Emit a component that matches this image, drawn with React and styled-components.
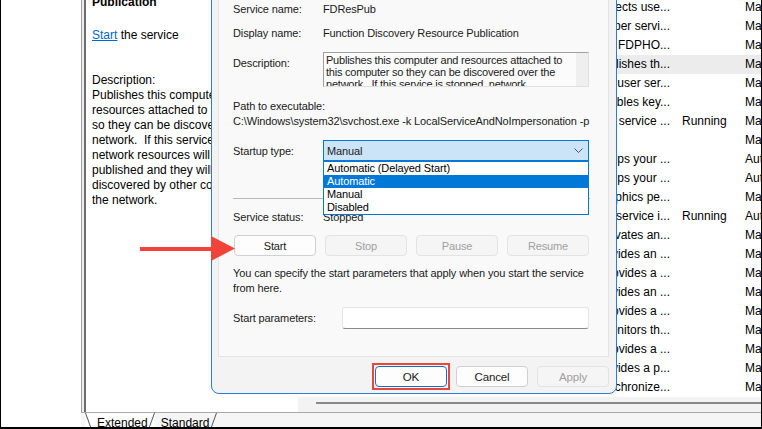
import React from 'react';
import styled, { createGlobalStyle } from 'styled-components';

const GlobalStyle = createGlobalStyle`
  html, body { margin: 0; padding: 0; background: #fff; }
  body { font-family: "Liberation Sans", Arial, sans-serif; color: #000; }
  * { box-sizing: border-box; }
`;

const Frame = styled.div`
  position: relative;
  width: 762px;
  height: 429px;
  display: flex;
  overflow: hidden;
  background: #fff;
  border-left: 1px solid #000;
  border-right: 1px solid #000;
  border-bottom: 2px solid #000;
`;

const TreePane = styled.div`
  width: 80px;
  flex: none;
  background: #fff;
`;

const MainPane = styled.div`
  flex: 1;
  min-width: 0;
  display: flex;
  flex-direction: column;
`;

const Body = styled.div`
  flex: 1;
  min-height: 0;
  display: flex;
`;

const Splitter = styled.div`
  width: 5px;
  flex: none;
  background: #ececec;
  border-left: 1px solid #a0a0a0;
  border-right: 2px solid #6e6e6e;
`;

const DetailPane = styled.div`
  width: 212px;
  flex: none;
  padding: 0 6px;
  background: #fff;
  font-size: 12px;
  line-height: 15px;
  overflow: hidden;
  white-space: pre;
`;

const DetailTitle = styled.div`
  margin-top: -5px;
  font-weight: bold;
`;

const DetailLine = styled.div`
  margin-top: ${p => p.$gap || 0}px;
`;

const ServiceLink = styled.a`
  color: #0066cc;
  text-decoration: underline;
`;

const ListPane = styled.div`
  flex: 1;
  min-width: 0;
  display: flex;
  flex-direction: column;
  background: #fff;
`;

const Rows = styled.div`
  flex: 1;
  overflow: hidden;
`;

const RowsInner = styled.div`
  margin-top: -2px;
`;

const ListRow = styled.div`
  display: grid;
  grid-template-columns: 374px 67px 1fr;
  height: 19px;
  line-height: 19px;
  font-size: 12px;
  background: ${p => (p.$selected ? '#ececec' : 'transparent')};
`;

const DescCell = styled.div`
  text-align: right;
  padding-right: 2px;
  white-space: nowrap;
  overflow: hidden;
`;

const StatusCell = styled.div`
  padding-left: 10px;
  white-space: nowrap;
`;

const StartupCell = styled.div`
  padding-left: 6px;
  white-space: nowrap;
  overflow: hidden;
`;

const HScroll = styled.div`
  height: 15px;
  flex: none;
  background: #f3f3f3;
  padding: 5px 0 0 18px;
`;

const ScrollThumb = styled.div`
  height: 2px;
  background: #8a8a8a;
`;

const TabStrip = styled.div`
  height: 15px;
  flex: none;
  display: flex;
  padding-left: 4px;
  background: #f6f6f6;
  border-top: 1px solid #a8a8a8;
  font-size: 12px;
  line-height: 15px;
  overflow: hidden;
`;

const Tab = styled.div`
  position: relative;
  padding: 3px ${p => p.$right}px 0 ${p => p.$left}px;
  background: ${p => (p.$active ? '#fff' : 'transparent')};

  &::before {
    content: "";
    display: ${p => (p.$active ? 'block' : 'none')};
    position: absolute;
    left: 0;
    top: 0;
    bottom: 0;
    width: 1px;
    background: #555;
    transform: skewX(20deg);
    transform-origin: top left;
  }

  &::after {
    content: "";
    position: absolute;
    right: 0;
    top: 0;
    bottom: 0;
    width: 1px;
    background: #555;
    transform: skewX(-20deg);
    transform-origin: top right;
  }
`;

/* ---- the properties dialog ---- */

const Dialog = styled.div`
  position: absolute;
  left: 210px;
  top: -40px;
  width: 406px;
  height: 434px;
  display: flex;
  flex-direction: column;
  background: #f3f3f3;
  border: 1px solid #2b7cd3;
  border-radius: 0 0 8px 8px;
  font-size: 11px;
  letter-spacing: -0.12px;
  color: #1a1a1a;
  z-index: 3;
`;

const Panel = styled.div`
  flex: 1;
  margin: 0 7px 0 6px;
  padding: 38px 18px 0 14px;
  background: #f9f9f9;
  border: 1px solid #e3e3e3;
  border-top: none;
`;

const FieldRow = styled.div`
  display: flex;
  align-items: ${p => (p.$top ? 'flex-start' : 'center')};
  height: ${p => p.$h}px;
  margin-top: ${p => p.$mt || 0}px;
`;

const Label = styled.div`
  width: ${p => p.$w || 90}px;
  flex: none;
  line-height: 16px;
  padding-top: ${p => p.$pt || 0}px;
  white-space: nowrap;
`;

const Value = styled.div`
  line-height: 16px;
  white-space: nowrap;
`;

const TextLine = styled.div`
  line-height: ${p => p.$lh || 16}px;
  margin-top: ${p => p.$mt || 0}px;
  white-space: pre;
`;

const DescBox = styled.div`
  width: 266px;
  height: 35px;
  display: flex;
  background: #fbfbfb;
  border: 1px solid #e0e0e0;
  border-top-color: #a0a0a0;
  border-left-color: #a0a0a0;
  overflow: hidden;
`;

const DescText = styled.div`
  flex: 1;
  padding: 1px 0 0 2px;
  line-height: 12px;
  letter-spacing: -0.22px;
  white-space: pre;
  overflow: hidden;
`;

const DescScroll = styled.div`
  width: 12px;
  flex: none;
  background: #efefef;
`;

const SelectWrap = styled.div`
  position: relative;
  width: 266px;
`;

const SelectBox = styled.div`
  height: 21px;
  display: flex;
  align-items: center;
  justify-content: space-between;
  padding: 0 5px 0 3px;
  background: #cce4f7;
  border: 1px solid #0078d4;
  line-height: 16px;
`;

const DropList = styled.div`
  position: absolute;
  left: 0;
  right: 0;
  top: 100%;
  background: #fff;
  border: 1px solid #0078d7;
  z-index: 2;
`;

const DropItem = styled.div`
  height: 13px;
  line-height: 13px;
  padding-left: 3px;
  white-space: nowrap;
  background: ${p => (p.$active ? '#0078d7' : 'transparent')};
  color: ${p => (p.$active ? '#fff' : '#000')};
`;

const Separator = styled.div`
  height: 1px;
  margin-top: 37px;
  background: #b8b8b8;
`;

const ControlRow = styled.div`
  display: grid;
  grid-template-columns: repeat(4, 82px);
  gap: 9px;
  margin: 10px 0 0 1px;
`;

const ControlButton = styled.div`
  height: 21px;
  display: flex;
  align-items: center;
  justify-content: center;
  border-radius: 4px;
  border: 1px solid ${p => (p.$disabled ? '#e3e3e3' : '#d0d0d0')};
  background: ${p => (p.$disabled ? '#f5f5f5' : '#fdfdfd')};
  color: ${p => (p.$disabled ? '#a0a0a0' : '#1a1a1a')};
`;

const ParamInput = styled.div`
  width: 247px;
  height: 22px;
  background: #fff;
  border: 1px solid #e5e5e5;
  border-bottom-color: #8a8a8a;
  border-radius: 3px;
`;

const Footer = styled.div`
  height: 36px;
  flex: none;
  display: flex;
  justify-content: flex-end;
  align-items: flex-start;
  gap: 9px;
  padding: 9px 7px 0 0;
`;

const Highlight = styled.span`
  display: inline-flex;
  outline: 2px solid #e8483c;
  outline-offset: 1px;
`;

const FooterButton = styled.div`
  width: 72px;
  height: 21px;
  display: flex;
  align-items: center;
  justify-content: center;
  border-radius: 4px;
  font-size: 11.5px;
  border: 1px solid
    ${p => (p.$variant === 'default' ? '#1a6fc4' : p.$variant === 'disabled' ? '#e3e3e3' : '#d0d0d0')};
  background: ${p => (p.$variant === 'disabled' ? '#f5f5f5' : '#fdfdfd')};
  color: ${p => (p.$variant === 'disabled' ? '#a0a0a0' : '#1a1a1a')};
`;

const Arrow = styled.svg`
  position: absolute;
  left: 137px;
  top: 234px;
  z-index: 4;
`;

const rows = [
  ['Protects use...', '', 'Ma'],
  ['Helper servi...', '', 'Ma'],
  ['The FDPHO...', '', 'Ma'],
  ['Publishes th...', '', 'Ma', true],
  ['This user ser...', '', 'Ma'],
  ['Enables key...', '', 'Ma'],
  ['This service ...', 'Running', 'Ma'],
  ['', '', 'Ma'],
  ['Helps your ...', '', 'Aut'],
  ['Helps your ...', '', 'Aut'],
  ['Graphics pe...', '', 'Ma'],
  ['This service i...', 'Running', 'Aut'],
  ['Activates an...', '', 'Ma'],
  ['Provides an ...', '', 'Ma'],
  ['Provides a ...', '', 'Ma'],
  ['Provides an ...', '', 'Ma'],
  ['Provides a ...', '', 'Ma'],
  ['Monitors th...', '', 'Ma'],
  ['Provides a ...', '', 'Ma'],
  ['Provides a p...', '', 'Ma'],
  ['Synchronize...', '', 'Ma'],
];

const descLines = [
  'Publishes this computer and',
  'resources attached to this computer',
  'so they can be discovered over the',
  'network.  If this service is stopped,',
  'network resources will no longer be',
  'published and they will not be',
  'discovered by other computers on',
  'the network.',
];

export default function App() {
  return (
    <>
      <GlobalStyle />
      <Frame>
        <TreePane />
        <MainPane>
          <Body>
            <Splitter />
            <DetailPane>
              <DetailTitle>Publication</DetailTitle>
              <DetailLine $gap={18}>
                <ServiceLink>Start</ServiceLink> the service
              </DetailLine>
              <DetailLine $gap={30}>Description:</DetailLine>
              {descLines.map(line => (
                <DetailLine key={line}>{line}</DetailLine>
              ))}
            </DetailPane>
            <ListPane>
              <Rows>
                <RowsInner>
                  {rows.map(([desc, status, startup, selected], i) => (
                    <ListRow key={i} $selected={selected}>
                      <DescCell>{desc}</DescCell>
                      <StatusCell>{status}</StatusCell>
                      <StartupCell>{startup}</StartupCell>
                    </ListRow>
                  ))}
                </RowsInner>
              </Rows>
              <HScroll>
                <ScrollThumb />
              </HScroll>
            </ListPane>
          </Body>
          <TabStrip>
            <Tab $active $left={12} $right={7}>Extended</Tab>
            <Tab $left={6} $right={8}>Standard</Tab>
          </TabStrip>
        </MainPane>

        <Dialog>
          <Panel>
            <FieldRow $h={20}>
              <Label>Service name:</Label>
              <Value>FDResPub</Value>
            </FieldRow>
            <FieldRow $h={20} $mt={4}>
              <Label>Display name:</Label>
              <Value>Function Discovery Resource Publication</Value>
            </FieldRow>
            <FieldRow $h={35} $mt={9} $top>
              <Label $pt={3}>Description:</Label>
              <DescBox>
                <DescText>
                  {'Publishes this computer and resources attached to\nthis computer so they can be discovered over the\nnetwork.  If this service is stopped, network'}
                </DescText>
                <DescScroll />
              </DescBox>
            </FieldRow>
            <TextLine $mt={11}>Path to executable:</TextLine>
            <TextLine $lh={14}>C:\Windows\system32\svchost.exe -k LocalServiceAndNoImpersonation -p</TextLine>
            <FieldRow $h={21} $mt={12}>
              <Label>Startup type:</Label>
              <SelectWrap>
                <SelectBox>
                  <span>Manual</span>
                  <svg width="9" height="5" viewBox="0 0 9 5">
                    <polyline points="0.5,0.5 4.5,4.5 8.5,0.5" fill="none" stroke="#555" strokeWidth="1" />
                  </svg>
                </SelectBox>
                <DropList>
                  <DropItem>Automatic (Delayed Start)</DropItem>
                  <DropItem $active>Automatic</DropItem>
                  <DropItem>Manual</DropItem>
                  <DropItem>Disabled</DropItem>
                </DropList>
              </SelectWrap>
            </FieldRow>
            <Separator />
            <FieldRow $h={16} $mt={10}>
              <Label>Service status:</Label>
              <Value>Stopped</Value>
            </FieldRow>
            <ControlRow>
              <ControlButton>Start</ControlButton>
              <ControlButton $disabled>Stop</ControlButton>
              <ControlButton $disabled>Pause</ControlButton>
              <ControlButton $disabled>Resume</ControlButton>
            </ControlRow>
            <TextLine $lh={15} $mt={10}>
              {'You can specify the start parameters that apply when you start the service\nfrom here.'}
            </TextLine>
            <FieldRow $h={22} $mt={11}>
              <Label $w={109}>Start parameters:</Label>
              <ParamInput />
            </FieldRow>
          </Panel>
          <Footer>
            <Highlight>
              <FooterButton $variant="default">OK</FooterButton>
            </Highlight>
            <FooterButton>Cancel</FooterButton>
            <FooterButton $variant="disabled">Apply</FooterButton>
          </Footer>
        </Dialog>

        <Arrow width="98" height="30" viewBox="0 0 98 30">
          <rect x="2" y="13" width="73" height="4" fill="#f0443a" />
          <polygon points="73,2 97,14.5 73,27" fill="#f0443a" />
        </Arrow>
      </Frame>
    </>
  );
}
